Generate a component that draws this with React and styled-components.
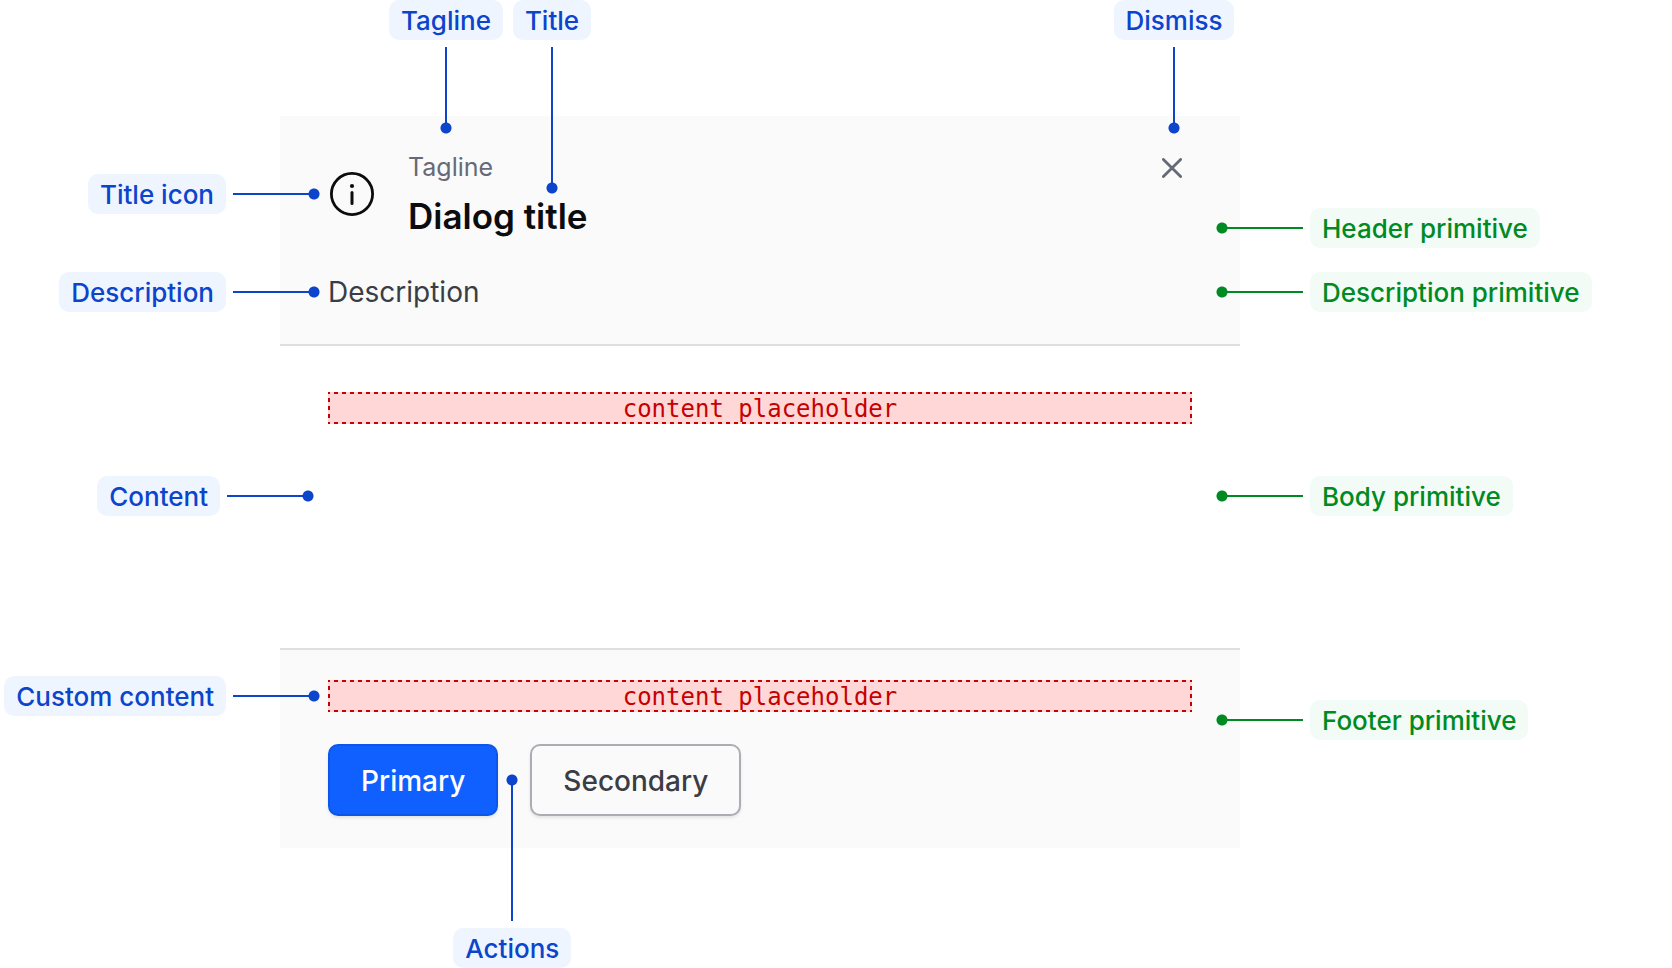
import React from 'react'
import styled, { createGlobalStyle, css } from 'styled-components'

const GlobalStyle = createGlobalStyle`
	:root {
		--blue: #0c44cc;
		--blue-surface: #eef5ff;
		--green: #008a22;
		--green-surface: #f2fbf6;
		--red: #c70000;
		--red-surface: #ffd7d7;
		--ink: #0c0c0e;
		--ink-primary: #3b3d45;
		--ink-faint: #656a76;
		--paper: #fafafa;
		--rule: #dedfe3;
	}

	* {
		box-sizing: border-box;
	}

	body {
		margin: 0;
		background: #fff;
		color: var(--ink);
		font-family: Inter, 'Liberation Sans', sans-serif;
	}
`

const Figure = styled.figure`
	margin: 0;
	padding: 116px 432px 120px 280px;
`

const Dialog = styled.section`
	min-width: 600px;
`

const Header = styled.header`
	position: relative;
	padding: 32px 48px;
	background: var(--paper);
	border-bottom: 2px solid var(--rule);
`

const TitleRow = styled.div`
	display: flex;
	align-items: flex-start;
	gap: 32px;

	> svg {
		align-self: center;
		flex: none;
	}
`

const TitleBlock = styled.div`
	flex: 1;
	display: grid;
	gap: 6px;
`

const Tagline = styled.p`
	margin: 0;
	font-size: 25px;
	line-height: 38px;
	color: var(--ink-faint);
`

const Title = styled.h1`
	margin: 0;
	font-size: 35px;
	line-height: 48px;
	font-weight: 600;
`

const DismissButton = styled.button`
	display: grid;
	place-items: center;
	width: 40px;
	height: 40px;
	padding: 0;
	border: 0;
	background: none;
	color: var(--ink-faint);
	cursor: pointer;
`

const Description = styled.p`
	margin: 32px 0 0;
	font-size: 28px;
	line-height: 40px;
	color: var(--ink-primary);
`

const Body = styled.div`
	position: relative;
	min-height: 302px;
	padding: 46px 48px;
`

const Footer = styled.footer`
	position: relative;
	padding: 30px 48px 32px;
	background: var(--paper);
	border-top: 2px solid var(--rule);
`

const dashes = angle => `linear-gradient(${angle}, var(--red) 50%, transparent 50%)`

// Dashes are painted as backgrounds to keep them 4px on, 4px off
const Placeholder = styled.div`
	padding-top: 2px;
	background-color: var(--red-surface);
	background-image: ${dashes('90deg')}, ${dashes('90deg')}, ${dashes('180deg')}, ${dashes('180deg')};
	background-size: 8px 2px, 8px 2px, 2px 8px, 2px 8px;
	background-repeat: repeat-x, repeat-x, repeat-y, repeat-y;
	background-position: -2px 0, -2px 100%, 0 -2px, 100% -2px;
	color: var(--red);
	font-family: 'DejaVu Sans Mono', monospace;
	font-size: 24px;
	line-height: 30px;
	text-align: center;
`

const Actions = styled.div`
	display: flex;
	gap: 32px;
	margin-top: 32px;
`

const Action = styled.div`
	position: relative;
`

const Button = styled.button`
	height: 72px;
	padding: 2px 31px 0;
	border: 2px solid ${p => (p.$primary ? '#0c56e9' : '#acadb2')};
	border-radius: 10px;
	background: ${p => (p.$primary ? '#1060ff' : 'var(--paper)')};
	color: ${p => (p.$primary ? '#fff' : 'var(--ink-primary)')};
	box-shadow: 0 2px 3px rgba(101, 106, 118, 0.15);
	font: 500 28px/40px Inter, 'Liberation Sans', sans-serif;
	cursor: pointer;
`

const Label = styled.span`
	padding: 2px 12px 0;
	border-radius: 10px;
	font-size: 26px;
	font-weight: 500;
	line-height: 38px;
	white-space: nowrap;
`

const Pointer = styled.span`
	display: flex;
	align-items: center;

	&::before {
		content: '';
		background: currentColor;
	}

	/* the dot overlaps the end of the line */
	&::after {
		content: '';
		width: 12px;
		height: 12px;
		margin: -2px;
		background: radial-gradient(circle, currentColor 5px, transparent 6px);
	}
`

const directions = {
	right: css`
		flex-direction: row;
		top: ${p => p.$y}px;
		right: calc(100% - ${p => p.$x}px);
	`,
	left: css`
		flex-direction: row-reverse;
		top: ${p => p.$y}px;
		left: calc(100% - ${p => p.$x}px);
		${Pointer} {
			flex-direction: row-reverse;
		}
	`,
	down: css`
		flex-direction: column;
		width: 0;
		top: -116px;
		${p => (p.$fromEnd ? 'right' : 'left')}: ${p => p.$x}px;
		${Pointer} {
			flex-direction: column;
		}
	`,
	up: css`
		flex-direction: column-reverse;
		width: 0;
		top: ${p => p.$y}px;
		left: calc(100% + ${p => p.$x}px);
		${Pointer} {
			flex-direction: column-reverse;
		}
	`,
}

// A label with a line that ends in a dot on the annotated part
const CalloutWrapper = styled.div`
	position: absolute;
	z-index: 1;
	display: flex;
	align-items: center;
	gap: 7px;
	color: var(--${p => p.$colour});
	${p => directions[p.$points]}

	${Label} {
		background: var(--${p => p.$colour}-surface);
	}

	${Pointer}::before {
		${p => p.$points === 'left' || p.$points === 'right'
			? `width: ${p.$length}px; height: 2px;`
			: `width: 2px; height: ${p.$length}px;`}
	}
`

const Callout = ({ points, x, y, length = 77, colour = 'blue', fromEnd, children }) => (
	<CalloutWrapper $points={points} $x={x} $y={y} $length={length} $colour={colour} $fromEnd={fromEnd}>
		<Label>{children}</Label>
		<Pointer />
	</CalloutWrapper>
)

const InfoIcon = () => (
	<svg width='48' height='48' viewBox='0 0 48 48' fill='none' aria-hidden='true'>
		<circle cx='24' cy='24' r='20.6' stroke='currentColor' strokeWidth='2.8' />
		<circle cx='24' cy='16' r='2.1' fill='currentColor' />
		<path d='M24 22.5v11' stroke='currentColor' strokeWidth='3' strokeLinecap='round' />
	</svg>
)

const CloseIcon = () => (
	<svg width='20' height='20' viewBox='0 0 20 20' fill='none' aria-hidden='true'>
		<path d='M1.4 1.4l17.2 17.2M18.6 1.4L1.4 18.6' stroke='currentColor' strokeWidth='2.8' strokeLinecap='round' />
	</svg>
)

const App = () => (
	<>
		<GlobalStyle />
		<Figure>
			<Dialog role='dialog' aria-labelledby='dialog-title'>
				<Header>
					<TitleRow>
						<InfoIcon />
						<TitleBlock>
							<Tagline>Tagline</Tagline>
							<Title id='dialog-title'>Dialog title</Title>
						</TitleBlock>
						<DismissButton type='button' aria-label='Dismiss'>
							<CloseIcon />
						</DismissButton>
					</TitleRow>
					<Description>Description</Description>

					<Callout points='down' x={166}>Tagline</Callout>
					<Callout points='down' x={272} length={137}>Title</Callout>
					<Callout points='down' x={66} fromEnd>Dismiss</Callout>
					<Callout points='right' x={38} y={58}>Title icon</Callout>
					<Callout points='right' x={38} y={156}>Description</Callout>
					<Callout points='left' x={22} y={92} colour='green'>Header primitive</Callout>
					<Callout points='left' x={22} y={156} colour='green'>Description primitive</Callout>
				</Header>

				<Body>
					<Placeholder>content placeholder</Placeholder>
					<Callout points='right' x={32} y={130}>Content</Callout>
					<Callout points='left' x={22} y={130} colour='green'>Body primitive</Callout>
				</Body>

				<Footer>
					<Placeholder>content placeholder</Placeholder>
					<Actions>
						<Action>
							<Button type='button' $primary>Primary</Button>
							<Callout points='up' x={14} y={32} length={137}>Actions</Callout>
						</Action>
						<Action>
							<Button type='button'>Secondary</Button>
						</Action>
					</Actions>
					<Callout points='right' x={38} y={26}>Custom content</Callout>
					<Callout points='left' x={22} y={50} colour='green'>Footer primitive</Callout>
				</Footer>
			</Dialog>
		</Figure>
	</>
)

export default App
